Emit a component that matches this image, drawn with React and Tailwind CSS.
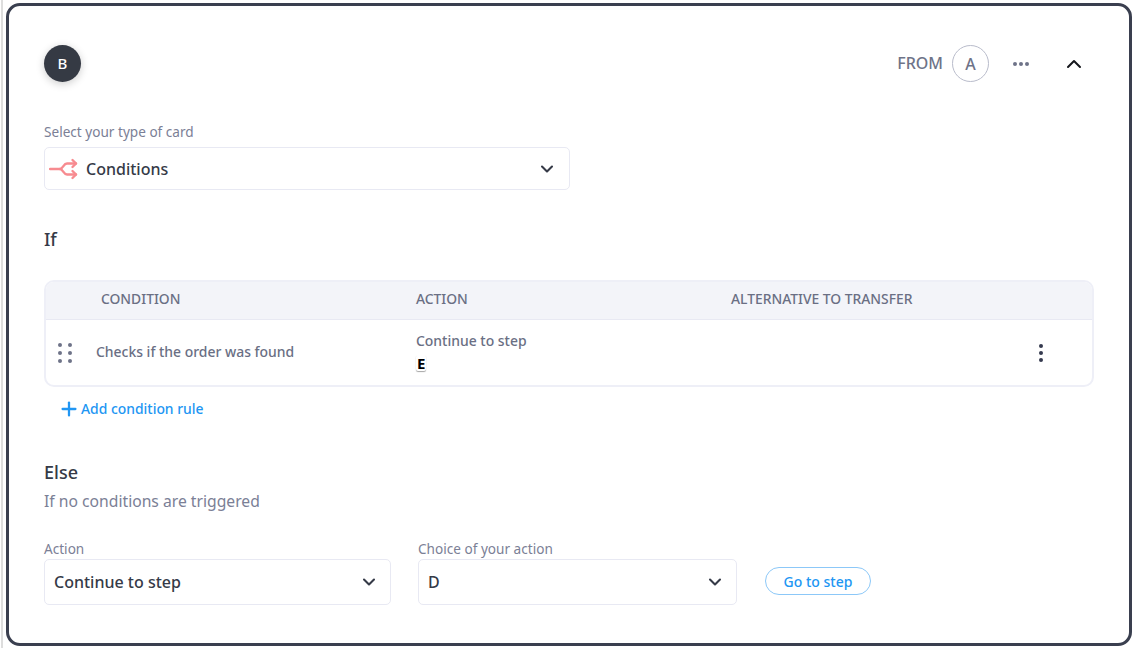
import { ChevronDown, ChevronUp, Plus } from 'lucide-react';

function BranchIcon() {
  return (
    <svg width="30" height="22" viewBox="0 0 30 22" fill="none" stroke="#f78b90" strokeWidth="2.4" strokeLinecap="round" strokeLinejoin="round">
      <path d="M1 11h10c3 0 3.500-5.500 7-5.500h9" />
      <path d="M11 11c3 0 3.500 5.500 7 5.500h9" />
      <path d="M23.500 2l3.500 3.500-3.500 3.500" />
      <path d="M23.500 13l3.500 3.500-3.500 3.500" />
    </svg>
  );
}

function Select({ className, children }) {
  return (
    <div className={`flex items-center justify-between bg-white border border-[#e8e9f3] rounded-[5px] ${className}`}>
      {children}
    </div>
  );
}

function Chevron() {
  return <ChevronDown className="w-[20px] h-[20px] text-[#353a47]" strokeWidth={2.5} />;
}

export default function App() {
  return (
    <div className="w-[1136px] h-[648px] bg-white pl-[1px] font-['Noto_Sans',sans-serif] text-[#353a47] overflow-hidden">
      <div className="h-full border-l-2 border-[#dddddd] pl-[3px] pr-[4px] pt-[3px] pb-[2px]">
        <div className="h-full border-[3px] border-[#3a3f4f] rounded-[14px] px-[35px] pt-[39px]">
          <div className="flex items-center justify-between h-[37px]">
            <div className="w-[37px] h-[37px] rounded-full bg-[#353a44] text-white text-[15px] font-medium flex items-center justify-center shadow-[0_2px_8px_rgba(0,0,0,0.2)]">
              B
            </div>
            <div className="flex items-center mr-[8px]">
              <span className="text-[16px] leading-[22px] font-medium text-[#6e7388] -mt-[2px]">FROM</span>
              <div className="ml-[9px] w-[37px] h-[37px] rounded-full border border-[#b9bccb] text-[#6e7388] text-[16px] font-medium flex items-center justify-center">
                A
              </div>
              <div className="ml-[24px] flex gap-[2px]">
                <span className="w-[4px] h-[4px] rounded-full bg-[#6e7388]" />
                <span className="w-[4px] h-[4px] rounded-full bg-[#6e7388]" />
                <span className="w-[4px] h-[4px] rounded-full bg-[#6e7388]" />
              </div>
              <ChevronUp className="ml-[33px] w-[24px] h-[24px] text-[#15171c]" strokeWidth={2} />
            </div>
          </div>

          <div className="mt-[41px] text-[13.6px] leading-[18px] text-[#7b8096]">Select your type of card</div>
          <Select className="mt-[6px] w-[526px] h-[43px] pl-[4px] pr-[12px]">
            <div className="flex items-center gap-[7px]">
              <BranchIcon />
              <span className="text-[16px] font-medium">Conditions</span>
            </div>
            <Chevron />
          </Select>

          <h2 className="mt-[37px] text-[18px] leading-[24px] font-medium">If</h2>

          <div className="mt-[29px] h-[107px] border-2 border-[#eeeff7] rounded-[10px] overflow-hidden">
            <div className="flex items-center h-[38px] pb-[2px] bg-[#f3f4f9] border-b border-[#e8e9f3] text-[13.85px] font-medium text-[#6a6f84]">
              <span className="ml-[55px] w-[315px]">CONDITION</span>
              <span className="w-[315px]">ACTION</span>
              <span>ALTERNATIVE TO TRANSFER</span>
            </div>
            <div className="flex items-center h-[65px]">
              <div className="ml-[12px] grid grid-cols-2 gap-x-[6px] gap-y-[4px]">
                {[0, 1, 2, 3, 4, 5].map((i) => (
                  <span key={i} className="w-[4px] h-[4px] rounded-full bg-[#6e7388]" />
                ))}
              </div>
              <span className="ml-[24px] w-[320px] text-[13.95px] font-medium text-[#6a6f84]">Checks if the order was found</span>
              <div className="w-[623px] -mt-[2px]">
                <div className="text-[13.95px] leading-[18px] font-medium text-[#6a6f84]">Continue to step</div>
                <div className="mt-[5px] w-fit px-[1px] text-[15px] leading-[16px] font-bold text-black bg-white shadow-[0_1px_1px_rgba(0,0,0,0.35)] rounded-[2px]">E</div>
              </div>
              <div className="flex flex-col gap-[3px]">
                <span className="w-[4px] h-[4px] rounded-full bg-[#353a4f]" />
                <span className="w-[4px] h-[4px] rounded-full bg-[#353a4f]" />
                <span className="w-[4px] h-[4px] rounded-full bg-[#353a4f]" />
              </div>
            </div>
          </div>

          <div className="mt-[12px] ml-[14px] flex items-center text-[13.9px] leading-[20px] font-medium text-[#2196f3]">
            <Plus className="w-[22px] h-[22px] -my-[1px]" strokeWidth={2.5} />
            <span className="ml-[1px]">Add condition rule</span>
          </div>

          <h2 className="mt-[41px] text-[18px] leading-[24px] font-medium">Else</h2>
          <p className="mt-[6px] text-[15.7px] leading-[22px] text-[#7b8096]">If no conditions are triggered</p>

          <div className="mt-[28px] flex items-end">
            <div>
              <div className="text-[13.6px] leading-[18px] text-[#7b8096]">Action</div>
              <Select className="mt-[1px] w-[347px] h-[46px] pl-[9px] pr-[11px]">
                <span className="text-[16px] font-medium">Continue to step</span>
                <Chevron />
              </Select>
            </div>
            <div className="ml-[27px]">
              <div className="text-[13.6px] leading-[18px] text-[#7b8096]">Choice of your action</div>
              <Select className="mt-[1px] w-[319px] h-[46px] pl-[9px] pr-[11px]">
                <span className="text-[16px] font-medium">D</span>
                <Chevron />
              </Select>
            </div>
            <button className="ml-[28px] mb-[10px] w-[106px] h-[28px] rounded-full border border-[#8cc8f8] text-[14px] font-medium text-[#2196f3] flex items-center justify-center">
              Go to step
            </button>
          </div>
        </div>
      </div>
    </div>
  );
}
